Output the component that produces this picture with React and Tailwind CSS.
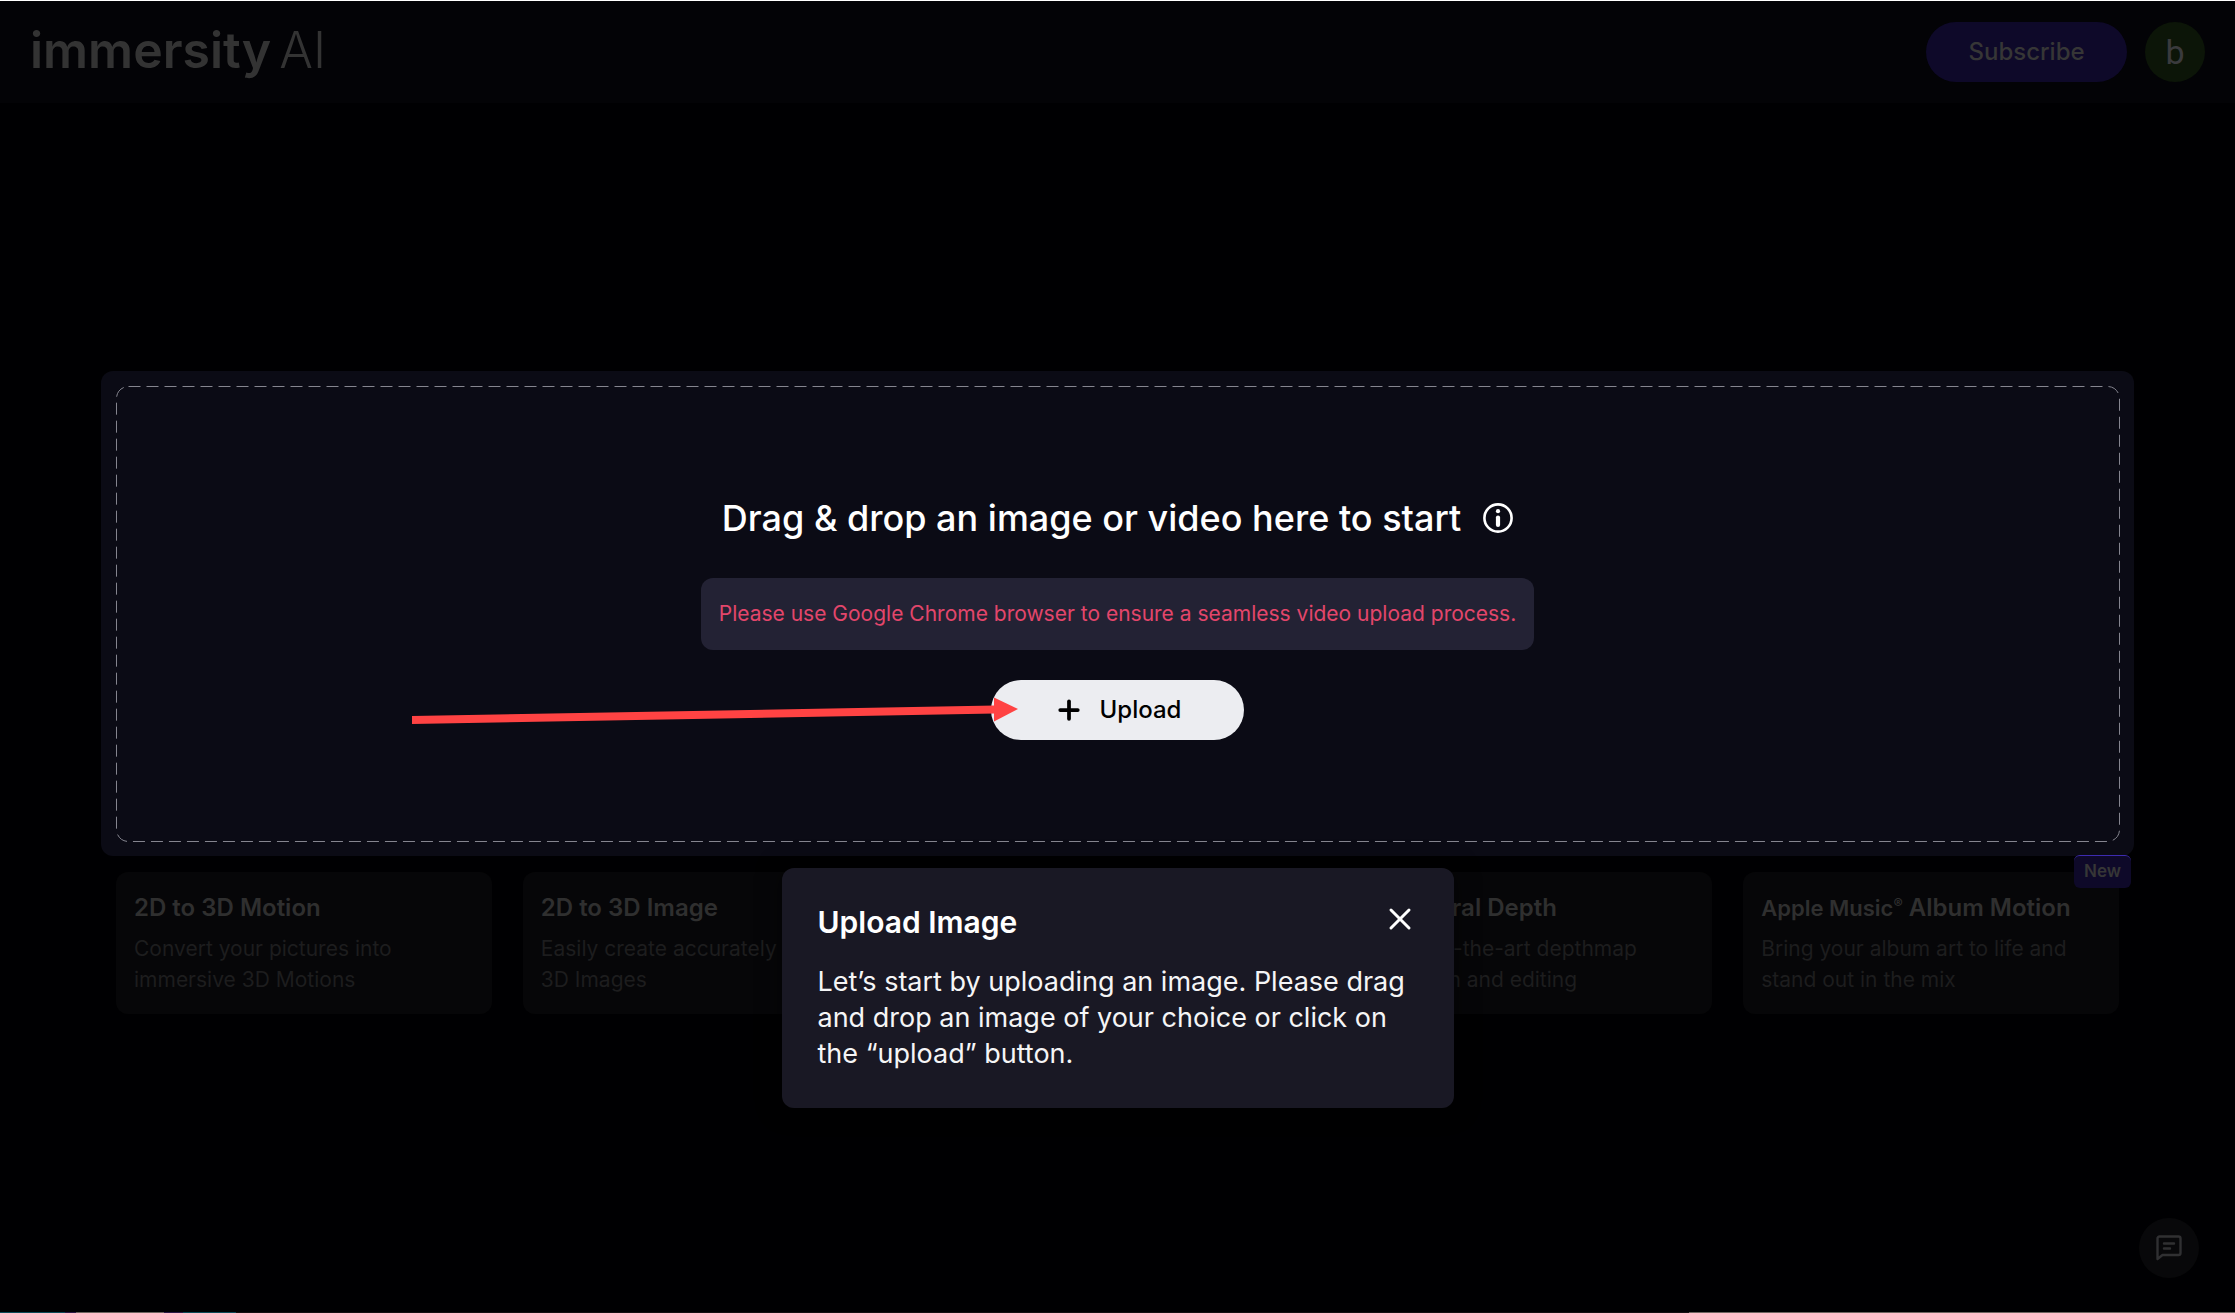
import { Plus, X } from 'lucide-react';
import { useState } from 'react';

const appleTitle = (
  <>
    <span className="text-[22px]">Apple Music</span>
    <sup className="text-[14px]">®</sup> Album Motion
  </>
);

const cards = [
  { id: 'motion', title: '2D to 3D Motion', lines: ['Convert your pictures into', 'immersive 3D Motions'] },
  { id: 'image', title: '2D to 3D Image', lines: ['Easily create accurately', '3D Images'] },
  { id: 'soon' },
  { id: 'depth', title: 'Edit Neural Depth', lines: ['A state-of-the-art depthmap', 'generation and editing'] },
  { id: 'apple', title: appleTitle, lines: ['Bring your album art to life and', 'stand out in the mix'], isNew: true },
];

function Header() {
  return (
    <header className="flex h-[103px] items-start justify-between border-t border-white bg-[#030306] px-[30px] pt-[21px]">
      <a href="#home" className="flex items-baseline gap-2 text-[50px] leading-[56px] text-[#333333]">
        <span className="font-semibold">immersity</span>
        <span className="font-light">AI</span>
      </a>
      <div className="flex items-center gap-[18px]">
        <button className="h-[60px] w-[201px] rounded-full bg-[#0e0929] text-[24px] font-medium text-[#363636]">Subscribe</button>
        <button className="h-[60px] w-[60px] rounded-full bg-[#0c1508] font-[Roboto] text-[34px] text-[#3a3a3d]">b</button>
      </div>
    </header>
  );
}

function InfoIcon() {
  return (
    <svg width="30" height="30" viewBox="0 0 30 30" fill="none" aria-hidden="true">
      <circle cx="15" cy="15" r="13.6" stroke="white" strokeWidth="2.6" />
      <circle cx="15" cy="8.2" r="2.1" fill="white" />
      <rect x="12.9" y="12.4" width="4.2" height="11.6" rx="2.1" fill="white" />
    </svg>
  );
}

function Arrow() {
  return (
    <svg width="606" height="30" viewBox="0 0 606 30" className="pointer-events-none absolute top-[17px] right-[calc(100%-27px)]" aria-hidden="true">
      <path d="M0 19L583 8.5V16.5L0 27Z" fill="#ff4343" />
      <path d="M582 0.5L606 12L582 24.5Z" fill="#ff4343" />
    </svg>
  );
}

function DropZone() {
  return (
    <div className="relative rounded-xl bg-[#0b0b15] p-[15px]">
      <svg className="pointer-events-none absolute inset-0 h-full w-full" aria-hidden="true">
        <rect className="h-[calc(100%-30px)] w-[calc(100%-30px)]" x="15.5" y="15.5" rx="12" fill="none" stroke="#85858f" strokeDasharray="12 6" />
      </svg>
      <div className="flex h-[455px] flex-col items-center justify-end gap-[30px] pb-[101px]">
        <div className="flex h-[60px] items-center gap-[22px]">
          <h1 className="text-[36px] font-medium whitespace-nowrap text-white">Drag &amp; drop an image or video here to start</h1>
          <button aria-label="Supported files">
            <InfoIcon />
          </button>
        </div>
        <p className="flex h-[72px] items-center rounded-xl bg-[#232234] px-[18px] text-[21px] whitespace-nowrap text-[#e3466b]">
          Please use Google Chrome browser to ensure a seamless video upload process.
        </p>
        <div className="relative">
          <button className="flex h-[60px] w-[253px] items-center justify-center gap-4 rounded-full bg-[#ecedf1] text-[24px] font-medium text-black">
            <Plus size={30} strokeWidth={3} />
            Upload
          </button>
          <Arrow />
        </div>
      </div>
    </div>
  );
}

function Card({ title, lines, isNew }) {
  return (
    <a href="#start" className="relative block rounded-xl bg-[#060608] p-[18px] whitespace-nowrap">
      {title && <h3 className="h-9 text-[24px] leading-9 font-semibold text-[#2f2f2f]">{title}</h3>}
      {lines && (
        <p className="mt-[7px] text-[21px] leading-[31px] text-[#1d1d1e]">
          {lines[0]}
          <br />
          {lines[1]}
        </p>
      )}
      {isNew && (
        <span className="absolute -top-[17px] -right-3 flex h-[33px] w-[57px] items-center justify-center rounded-md border-t border-[#3d2bb0] bg-[#0e0929] text-[17px] font-semibold text-[#363636]">
          New
        </span>
      )}
    </a>
  );
}

function UploadTip({ onClose }) {
  return (
    <div role="dialog" aria-labelledby="tip-title" className="absolute top-full left-1/2 z-10 mt-3 w-[672px] -translate-x-1/2 rounded-xl bg-[#191824] p-9 shadow-[0_0_24px_rgba(0,0,0,0.5)]">
      <div className="flex h-9 items-center justify-between">
        <h2 id="tip-title" className="text-[30px] leading-9 font-semibold text-white">Upload Image</h2>
        <button onClick={onClose} aria-label="Close" className="-mt-1.5 text-white">
          <X size={36} strokeWidth={2} />
        </button>
      </div>
      <p className="mt-6 text-[27px] leading-9 whitespace-nowrap text-[#f5f5f6]">
        Let’s start by uploading an image. Please drag
        <br />
        and drop an image of your choice or click on
        <br />
        the “upload” button.
      </p>
    </div>
  );
}

function BottomStrip() {
  return (
    <div className="flex h-px w-full">
      <div className="w-[65px] bg-[#0d4a58]" />
      <div className="w-[11px] bg-[#2a1a45]" />
      <div className="w-[88px] bg-[#6e6560]" />
      <div className="w-[19px] bg-[#2a1a45]" />
      <div className="w-[53px] bg-[#0d4a58]" />
      <div className="flex-1 bg-[#141012]" />
      <div className="w-[546px] bg-[#6e6560]" />
    </div>
  );
}

export default function App() {
  const [tipOpen, setTipOpen] = useState(true);

  return (
    <div className="flex min-h-screen flex-col bg-[#000002] font-[Inter,sans-serif]">
      <Header />
      <main className="flex flex-1 flex-col justify-center px-[101px] pb-[30px]">
        <div className="relative">
          <DropZone />
          {tipOpen && <UploadTip onClose={() => setTipOpen(false)} />}
        </div>
        <div className="mt-4 grid h-[142px] grid-cols-5 gap-[31px] px-[15px]">
          {cards.map((card) => (
            <Card key={card.id} title={card.title} lines={card.lines} isNew={card.isNew} />
          ))}
        </div>
      </main>
      <button aria-label="Chat" className="fixed right-9 bottom-[35px] grid h-[60px] w-[60px] place-items-center rounded-full bg-[#08080a]">
        <svg width="26" height="26" viewBox="0 0 26 26" fill="none" stroke="#303032" strokeWidth="2.4" strokeLinecap="round" strokeLinejoin="round" aria-hidden="true">
          <path d="M1.5 24V3.5A2 2 0 0 1 3.5 1.5H22.5A2 2 0 0 1 24.5 3.5V18A2 2 0 0 1 22.5 20H6.5Z" />
          <path d="M8 8.5H18M8 13.5H14" />
        </svg>
      </button>
      <BottomStrip />
    </div>
  );
}
